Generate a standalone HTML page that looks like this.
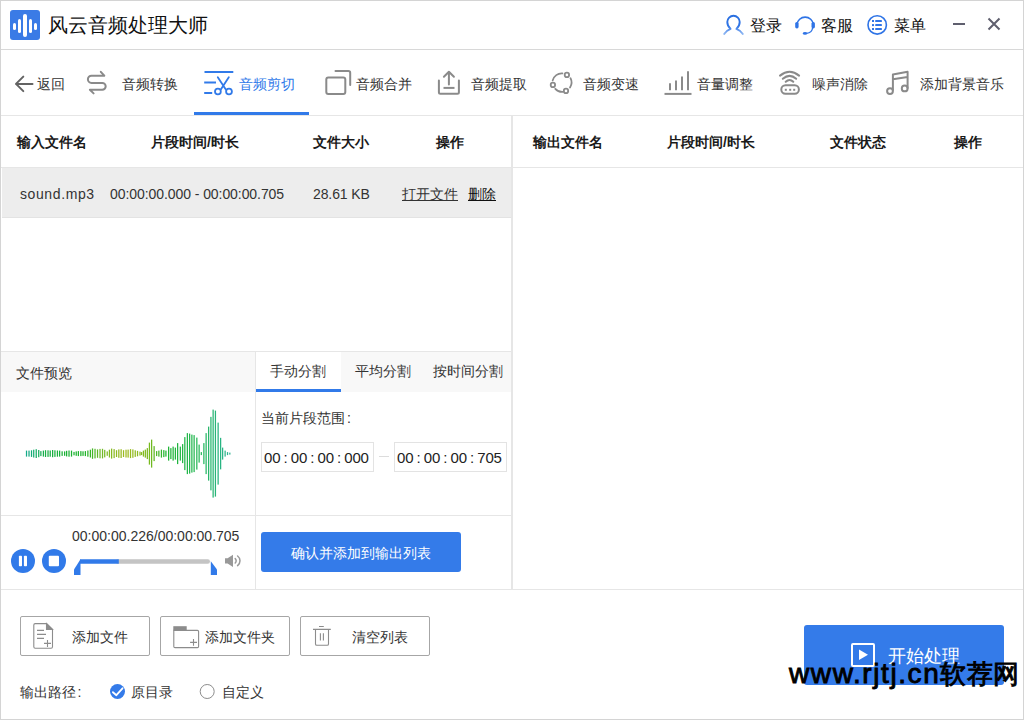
<!DOCTYPE html>
<html><head><meta charset="utf-8">
<style>
html,body{margin:0;padding:0;}
body{width:1024px;height:720px;position:relative;overflow:hidden;background:#fff;font-family:"Liberation Sans",sans-serif;color:#333;}
.a{position:absolute;}
.t{position:absolute;white-space:nowrap;line-height:20px;font-size:14px;}
.hl{position:absolute;height:1px;background:#e6e6e6;}
.vl{position:absolute;width:1px;background:#e6e6e6;}
.b{font-weight:bold;color:#1a1a1a;}
svg{position:absolute;overflow:visible;}
</style></head><body>
<!-- window border -->
<div class="a" style="left:0;top:0;width:1022px;height:718px;border:1px solid #d4d4d4;"></div>

<!-- TITLE BAR -->
<div class="a" style="left:10px;top:10px;width:30px;height:30px;background:#3a7be6;border-radius:3px;"></div>
<div class="a" style="left:13px;top:22.7px;width:3px;height:7.5px;background:#fff;border-radius:1.5px;"></div>
<div class="a" style="left:18px;top:18.9px;width:3px;height:14.2px;background:#fff;border-radius:1.5px;"></div>
<div class="a" style="left:23px;top:13.9px;width:4px;height:23px;background:#fff;border-radius:2px;"></div>
<div class="a" style="left:29px;top:18.9px;width:3px;height:14.2px;background:#fff;border-radius:1.5px;"></div>
<div class="a" style="left:34px;top:22.7px;width:3px;height:7.5px;background:#fff;border-radius:1.5px;"></div>
<div class="t" style="left:48px;top:15px;font-size:20px;color:#111;">风云音频处理大师</div>

<!-- user icon -->
<svg width="1024" height="720" style="left:0;top:0;">
<defs>
<linearGradient id="ug" x1="0" y1="15" x2="0" y2="35" gradientUnits="userSpaceOnUse"><stop offset="0" stop-color="#2a6fe0"/><stop offset="0.55" stop-color="#2f74e6"/><stop offset="1" stop-color="#9cc0f4"/></linearGradient>
</defs>
<path d="M724.2 34 C725.8 31.3 727.8 30 730.6 28.9 C728.3 27 727.3 24.6 727.3 22 A6.2 6.2 0 0 1 739.7 22 C739.7 24.6 738.7 27 736.4 28.9 C739.2 30 741.2 31.3 742.8 34" fill="none" stroke="url(#ug)" stroke-width="1.9" stroke-linecap="round" stroke-linejoin="round"/>
<!-- headset -->
<path d="M796.9 24.5 A8.3 8.3 0 0 1 813.4 24.5" fill="none" stroke="#2f74e6" stroke-width="1.6"/>
<rect x="795.2" y="22" width="3.4" height="6.4" rx="1.6" fill="#2f74e6"/>
<rect x="811.5" y="22" width="3.4" height="6.4" rx="1.6" fill="#2f74e6"/>
<path d="M812.5 28 Q812.3 32.6 806.5 33.3" fill="none" stroke="#2f74e6" stroke-width="1.3"/>
<ellipse cx="805" cy="33.4" rx="2.2" ry="1.4" fill="#2f74e6"/>
<!-- menu -->
<circle cx="877.2" cy="24.9" r="9.2" fill="none" stroke="#2f74e6" stroke-width="1.6"/>
<rect x="872" y="20" width="2" height="2" fill="#2f74e6"/>
<rect x="872" y="24.1" width="2" height="2" fill="#2f74e6"/>
<rect x="872" y="28" width="2" height="2" fill="#2f74e6"/>
<rect x="875.2" y="20" width="6.7" height="2" rx="0.6" fill="#2f74e6"/>
<rect x="875.2" y="24.1" width="6.7" height="2" rx="0.6" fill="#2f74e6"/>
<rect x="875.2" y="28" width="6.7" height="2" rx="0.6" fill="#2f74e6"/>
<!-- minimize / close -->
<rect x="953" y="23" width="12" height="2" fill="#5f5f6e"/>
<path d="M988.5 18.5 L999.5 29.5 M999.5 18.5 L988.5 29.5" stroke="#5f5f6e" stroke-width="2" fill="none"/>
</svg>
<div class="t" style="left:750px;top:16px;font-size:16px;color:#111;">登录</div>
<div class="t" style="left:821px;top:16px;font-size:16px;color:#111;">客服</div>
<div class="t" style="left:894px;top:16px;font-size:16px;color:#111;">菜单</div>

<div class="hl" style="left:1px;top:49px;width:1022px;background:#d8d8d8;"></div>

<!-- TOOLBAR -->
<svg width="1024" height="720" style="left:0;top:0;" fill="none" stroke="#8a8a8a" stroke-width="2" stroke-linecap="round" stroke-linejoin="round">
<!-- back -->
<path d="M23.3 76.6 L16 83.9 L23.3 91.1 M16 83.9 L32.5 83.9" stroke="#636363"/>
<!-- swap -->
<path d="M100.8 71.8 L104.3 75.7 L91.5 75.7 A3.6 3.6 0 0 0 91.5 82.9 L102.3 82.9 A3.4 3.4 0 0 1 102.3 89.7 L89.9 89.7 L93.6 93.4"/>
<!-- scissors (active) -->
<g stroke="#317ae9">
<path d="M204.5 71.9 L233.3 71.9 M204.2 82.5 L216 82.5 M204.2 93 L212.2 93" stroke-linecap="butt"/>
<path d="M217.8 77.3 L225.8 89.5 M228.8 77.3 L220.8 89.5" stroke-width="1.8"/>
<circle cx="217.9" cy="91.5" r="2.9" stroke-width="1.8"/>
<circle cx="229" cy="91.5" r="2.9" stroke-width="1.8"/>
</g>
<!-- merge -->
<rect x="326.3" y="77.4" width="19" height="16.6" rx="2"/>
<path d="M335.5 71 L348.4 71 Q350.2 71 350.2 72.8 L350.2 85" />
<!-- extract -->
<path d="M438.9 80.5 L438.9 92.3 Q438.9 93.8 440.4 93.8 L457.4 93.8 Q458.9 93.8 458.9 92.3 L458.9 80.5"/>
<path d="M448.9 72.3 L448.9 84.4 M443.9 76.7 L448.9 71.7 L453.9 76.7"/>
<path d="M443.5 87.9 L454.5 87.9" stroke-linecap="butt"/>
<!-- speed -->
<g stroke-width="1.8">
<path d="M552.7 80.4 A9.3 9.3 0 0 1 562.4 73.4"/>
<path d="M570.5 78.2 A9.3 9.3 0 0 1 570 87.5"/>
<path d="M563 91.8 A9.3 9.3 0 0 1 555.3 88.8"/>
<circle cx="566.9" cy="74.9" r="2.2"/>
<circle cx="552.9" cy="84.9" r="2.2"/>
<circle cx="566" cy="90.9" r="2.2"/>
</g>
<!-- volume -->
<path d="M664.5 93.9 L691.5 93.9" stroke-linecap="butt"/>
<path d="M670 83.3 L670 90.2 M676 80.4 L676 90.2 M682 76.4 L682 90.2 M688 71.3 L688 90.2" stroke-linecap="butt"/>
<!-- noise -->
<path d="M780 75.6 Q789.6 68 799.1 75.6 M782.8 78.8 Q789.6 73 796.2 78.8 M785.7 81.8 Q789.6 78 793.3 81.8"/>
<rect x="781.3" y="85.3" width="17.6" height="8.4" rx="4.2"/>
<g fill="#8a8a8a" stroke="none">
<rect x="784.8" y="88.8" width="2" height="2"/><rect x="789.2" y="88.8" width="2" height="2"/><rect x="793.2" y="88.8" width="2" height="2"/>
</g>
<!-- music -->
<path d="M892.9 90 L892.9 74.4 L907.6 71.8 L907.6 88 M892.9 79.3 L907.6 77"/>
<circle cx="890" cy="91.1" r="2.9"/>
<circle cx="904.7" cy="88.4" r="2.9"/>
</svg>
<div class="t" style="left:37px;top:74px;">返回</div>
<div class="t" style="left:122px;top:74px;">音频转换</div>
<div class="t" style="left:239px;top:74px;color:#317ae9;">音频剪切</div>
<div class="t" style="left:356px;top:74px;">音频合并</div>
<div class="t" style="left:471px;top:74px;">音频提取</div>
<div class="t" style="left:583px;top:74px;">音频变速</div>
<div class="t" style="left:697px;top:74px;">音量调整</div>
<div class="t" style="left:812px;top:74px;">噪声消除</div>
<div class="t" style="left:920px;top:74px;">添加背景音乐</div>
<div class="a" style="left:194px;top:112px;width:115px;height:3px;background:#317ae9;"></div>
<div class="hl" style="left:1px;top:115px;width:1022px;"></div>

<!-- MAIN TABLES -->
<div class="a" style="left:511px;top:116px;width:2px;height:473px;background:#e6e6e6;"></div>
<div class="t b" style="left:17px;top:132px;">输入文件名</div>
<div class="t b" style="left:151px;top:132px;">片段时间/时长</div>
<div class="t b" style="left:313px;top:132px;">文件大小</div>
<div class="t b" style="left:436px;top:132px;">操作</div>
<div class="t b" style="left:533px;top:132px;">输出文件名</div>
<div class="t b" style="left:667px;top:132px;">片段时间/时长</div>
<div class="t b" style="left:830px;top:132px;">文件状态</div>
<div class="t b" style="left:954px;top:132px;">操作</div>
<div class="hl" style="left:1px;top:167px;width:1022px;"></div>
<div class="a" style="left:2px;top:168px;width:509px;height:49px;background:#ededed;border-bottom:1px solid #e3e3e3;"></div>
<div class="t" style="left:20px;top:184px;letter-spacing:0.6px;color:#333;">sound.mp3</div>
<div class="t" style="left:110px;top:184px;letter-spacing:-0.07px;color:#333;">00:00:00.000 - 00:00:00.705</div>
<div class="t" style="left:313px;top:184px;letter-spacing:-0.1px;color:#333;">28.61 KB</div>
<div class="t" style="left:402px;top:184px;color:#333;text-decoration:underline;">打开文件</div>
<div class="t" style="left:468px;top:184px;color:#111;text-decoration:underline;">删除</div>

<!-- PREVIEW -->
<div class="hl" style="left:1px;top:351px;width:510px;"></div>
<div class="a" style="left:1px;top:352px;width:254px;height:40px;background:#f8f8f8;"></div>
<div class="a" style="left:341px;top:352px;width:170px;height:40px;background:#f8f8f8;"></div>
<div class="vl" style="left:255px;top:352px;height:237px;"></div>
<div class="a" style="left:256px;top:389px;width:85px;height:3px;background:#317ae9;"></div>
<div class="t" style="left:16px;top:363px;">文件预览</div>
<div class="t" style="left:270px;top:361px;">手动分割</div>
<div class="t" style="left:355px;top:361px;">平均分割</div>
<div class="t" style="left:433px;top:361px;">按时间分割</div>
<!-- WAVE --><svg width="1024" height="720" style="left:0;top:0;"><rect x="25.90" y="450.60" width="1.25" height="6.00" fill="#14aa8a"/><rect x="28.40" y="450.60" width="1.25" height="6.00" fill="#14aa81"/><rect x="30.90" y="450.30" width="1.25" height="6.60" fill="#15ab78"/><rect x="33.10" y="449.70" width="1.25" height="7.80" fill="#16ac70"/><rect x="35.60" y="449.20" width="1.25" height="8.80" fill="#16ac66"/><rect x="38.10" y="450.00" width="1.25" height="7.20" fill="#17ad5d"/><rect x="40.25" y="451.10" width="1.25" height="5.00" fill="#17ad55"/><rect x="42.75" y="450.60" width="1.25" height="6.00" fill="#18ae4c"/><rect x="44.90" y="450.20" width="1.25" height="6.80" fill="#19af45"/><rect x="47.40" y="450.30" width="1.25" height="6.60" fill="#19af43"/><rect x="49.60" y="450.50" width="1.25" height="6.20" fill="#19af42"/><rect x="52.00" y="450.00" width="1.25" height="7.20" fill="#19af40"/><rect x="54.30" y="450.30" width="1.25" height="6.60" fill="#1ab03e"/><rect x="56.80" y="450.50" width="1.25" height="6.20" fill="#1ab03c"/><rect x="59.00" y="450.60" width="1.25" height="6.00" fill="#1ab03b"/><rect x="61.50" y="451.30" width="1.25" height="4.60" fill="#1bb139"/><rect x="64.00" y="451.40" width="1.25" height="4.40" fill="#1bb137"/><rect x="66.00" y="450.80" width="1.25" height="5.60" fill="#1bb135"/><rect x="68.40" y="450.50" width="1.25" height="6.20" fill="#1bb134"/><rect x="70.90" y="450.60" width="1.25" height="6.00" fill="#1cb232"/><rect x="73.40" y="451.90" width="1.25" height="3.40" fill="#1cb230"/><rect x="75.60" y="451.40" width="1.25" height="4.40" fill="#1cb22e"/><rect x="77.75" y="451.10" width="1.25" height="5.00" fill="#1db32d"/><rect x="80.25" y="451.10" width="1.25" height="5.00" fill="#1db32b"/><rect x="82.40" y="451.30" width="1.25" height="4.60" fill="#1db329"/><rect x="84.75" y="451.10" width="1.25" height="5.00" fill="#1fb428"/><rect x="87.25" y="450.50" width="1.25" height="6.20" fill="#2cb428"/><rect x="89.75" y="449.70" width="1.25" height="7.80" fill="#3ab528"/><rect x="91.90" y="448.40" width="1.25" height="10.40" fill="#45b628"/><rect x="94.40" y="448.80" width="1.25" height="9.60" fill="#52b728"/><rect x="96.90" y="449.40" width="1.25" height="8.40" fill="#60b828"/><rect x="99.40" y="448.90" width="1.25" height="9.40" fill="#6db828"/><rect x="101.90" y="448.80" width="1.25" height="9.60" fill="#72b927"/><rect x="104.10" y="449.85" width="1.25" height="7.50" fill="#77b926"/><rect x="106.60" y="451.40" width="1.25" height="4.40" fill="#7cb925"/><rect x="108.80" y="449.70" width="1.25" height="7.80" fill="#80b924"/><rect x="111.00" y="448.60" width="1.25" height="10.00" fill="#85b923"/><rect x="113.50" y="449.10" width="1.25" height="9.00" fill="#8ab922"/><rect x="115.90" y="450.20" width="1.25" height="6.80" fill="#8eb921"/><rect x="118.20" y="449.40" width="1.25" height="8.40" fill="#93b920"/><rect x="120.50" y="449.20" width="1.25" height="8.80" fill="#98b91f"/><rect x="122.90" y="450.20" width="1.25" height="6.80" fill="#9cb91e"/><rect x="125.40" y="449.70" width="1.25" height="7.80" fill="#9eb91e"/><rect x="127.50" y="449.60" width="1.25" height="8.00" fill="#9bb91e"/><rect x="129.90" y="449.10" width="1.25" height="9.00" fill="#97b91e"/><rect x="132.25" y="449.40" width="1.25" height="8.40" fill="#93b91e"/><rect x="134.60" y="450.30" width="1.25" height="6.60" fill="#8fb91e"/><rect x="136.90" y="450.90" width="1.25" height="5.40" fill="#8cb91e"/><rect x="139.40" y="451.60" width="1.25" height="4.00" fill="#88b91e"/><rect x="141.00" y="452.10" width="1.25" height="3.00" fill="#85b91e"/><rect x="142.80" y="450.60" width="1.25" height="6.00" fill="#82b91e"/><rect x="144.70" y="449.60" width="1.25" height="8.00" fill="#7fb91e"/><rect x="146.70" y="448.10" width="1.25" height="11.00" fill="#7cb91e"/><rect x="148.80" y="442.60" width="1.25" height="22.00" fill="#79b91e"/><rect x="151.00" y="439.60" width="1.25" height="28.00" fill="#6fb820"/><rect x="153.50" y="446.10" width="1.25" height="15.00" fill="#60b723"/><rect x="156.00" y="451.10" width="1.25" height="5.00" fill="#51b626"/><rect x="158.25" y="450.60" width="1.25" height="6.00" fill="#43b629"/><rect x="160.80" y="449.60" width="1.25" height="8.00" fill="#34b52d"/><rect x="163.20" y="450.10" width="1.25" height="7.00" fill="#25b430"/><rect x="165.30" y="450.60" width="1.25" height="6.00" fill="#1eb432"/><rect x="168.00" y="446.60" width="1.25" height="14.00" fill="#1fb436"/><rect x="170.25" y="448.10" width="1.25" height="11.00" fill="#1fb438"/><rect x="172.50" y="446.60" width="1.25" height="14.00" fill="#20b53b"/><rect x="174.75" y="447.60" width="1.25" height="12.00" fill="#20b53d"/><rect x="177.00" y="443.10" width="1.25" height="21.00" fill="#21b540"/><rect x="179.70" y="446.60" width="1.25" height="14.00" fill="#22b643"/><rect x="182.00" y="444.10" width="1.25" height="19.00" fill="#23b646"/><rect x="184.20" y="437.10" width="1.25" height="33.00" fill="#23b648"/><rect x="186.75" y="433.10" width="1.25" height="41.00" fill="#24b74b"/><rect x="189.00" y="433.60" width="1.25" height="40.00" fill="#25b74e"/><rect x="191.25" y="434.60" width="1.25" height="38.00" fill="#25b750"/><rect x="193.50" y="435.10" width="1.25" height="37.00" fill="#26b853"/><rect x="196.20" y="437.60" width="1.25" height="32.00" fill="#27b856"/><rect x="198.50" y="444.60" width="1.25" height="18.00" fill="#27b858"/><rect x="200.70" y="452.10" width="1.25" height="3.00" fill="#28b85c"/><rect x="203.25" y="443.10" width="1.25" height="21.00" fill="#28b861"/><rect x="205.50" y="433.10" width="1.25" height="41.00" fill="#28b766"/><rect x="208.00" y="426.60" width="1.25" height="54.00" fill="#28b66b"/><rect x="210.30" y="416.85" width="1.25" height="73.50" fill="#28b66f"/><rect x="212.50" y="409.60" width="1.25" height="88.00" fill="#28b574"/><rect x="214.80" y="410.60" width="1.25" height="86.00" fill="#28b578"/><rect x="217.50" y="422.60" width="1.25" height="62.00" fill="#28b47e"/><rect x="220.00" y="437.85" width="1.25" height="31.50" fill="#28b482"/><rect x="222.00" y="447.60" width="1.25" height="12.00" fill="#2ab486"/><rect x="224.50" y="450.60" width="1.25" height="6.00" fill="#2cb48b"/><rect x="226.90" y="452.10" width="1.25" height="3.00" fill="#2eb48f"/><rect x="229.20" y="452.60" width="1.25" height="2.00" fill="#30b493"/></svg>
<!-- /WAVE -->
<div class="t" style="left:261px;top:408px;">当前片段范围<span style="margin-left:2px">:</span></div>
<div class="a" style="left:261px;top:442px;width:111px;height:28px;border:1px solid #e3e3e3;"></div>
<div class="a" style="left:394px;top:442px;width:111px;height:28px;border:1px solid #e3e3e3;"></div>
<div class="a" style="left:379px;top:456px;width:10px;height:1px;background:#dcdcdc;"></div>
<div class="t" style="left:264px;top:448px;font-size:15px;word-spacing:-0.8px;letter-spacing:-0.17px;color:#222;">00 : 00 : 00 : 000</div>
<div class="t" style="left:397px;top:448px;font-size:15px;word-spacing:-0.8px;letter-spacing:-0.17px;color:#222;">00 : 00 : 00 : 705</div>
<div class="hl" style="left:1px;top:515px;width:510px;"></div>
<div class="t" style="left:72px;top:526px;">00:00:00.226/00:00:00.705</div>
<svg width="1024" height="720" style="left:0;top:0;">
<circle cx="23" cy="561" r="12" fill="#317ae9"/>
<rect x="18.9" y="555.8" width="3.1" height="10.4" rx="0.8" fill="#fff"/>
<rect x="23.9" y="555.8" width="3.1" height="10.4" rx="0.8" fill="#fff"/>
<circle cx="54" cy="561" r="12" fill="#317ae9"/>
<rect x="48.8" y="555.8" width="10.2" height="10.4" rx="1" fill="#fff"/>
<path d="M118 561.5 L207.8 561.5" stroke="#c4c4c4" stroke-width="4.4" stroke-linecap="round"/>
<path d="M80 561.5 L118.8 561.5" stroke="#317ae9" stroke-width="4.4"/>
<path d="M80.5 559.3 L80.5 575 L74 575 L74 569.4 Z" fill="#317ae9"/>
<path d="M210.8 561.2 L217 569.4 L217 575 L210.8 575 Z" fill="#317ae9"/>
<path d="M225 558.2 L227.6 558.2 L233 554.7 L233 567 L227.6 563.4 L225 563.4 Z" fill="#999"/>
<path d="M235.2 558.6 A3 3 0 0 1 235.2 563 M237.6 556 A6 6 0 0 1 237.6 565.6" fill="none" stroke="#999" stroke-width="1.5" stroke-linecap="round"/>
</svg>
<div class="a" style="left:261px;top:532px;width:200px;height:40px;background:#347be9;border-radius:3px;"></div>
<div class="t" style="left:291px;top:543px;color:#fff;">确认并添加到输出列表</div>
<div class="hl" style="left:1px;top:589px;width:1022px;"></div>

<!-- BOTTOM -->
<div class="a" style="left:20px;top:616px;width:128px;height:38px;border:1px solid #a6a6a6;border-radius:2px;"></div>
<div class="a" style="left:160px;top:616px;width:128px;height:38px;border:1px solid #a6a6a6;border-radius:2px;"></div>
<div class="a" style="left:300px;top:616px;width:128px;height:38px;border:1px solid #a6a6a6;border-radius:2px;"></div>
<svg width="1024" height="720" style="left:0;top:0;" fill="none" stroke="#8c8c8c" stroke-width="1.1">
<path d="M46.5 623.6 L35.2 623.6 Q33.8 623.6 33.8 625 L33.8 646.8 Q33.8 648.2 35.2 648.2 L51.1 648.2 Q52.5 648.2 52.5 646.8 L52.5 629.4 Z"/>
<path d="M46.5 623.6 L46.5 629.4 L52.5 629.4 Z" fill="#8c8c8c"/>
<path d="M37 630.4 L44 630.4 M37 634.4 L46 634.4 M37 638.4 L44 638.4 M44 643.4 L51 643.4 M47.5 640 L47.5 647"/>
<rect x="173.3" y="626.2" width="13.4" height="4.4" fill="#8c8c8c" stroke="none"/>
<path d="M173.8 630.4 L197.4 630.4 Q198.6 630.4 198.6 631.6 L198.6 646.4 Q198.6 647.6 197.4 647.6 L175 647.6 Q173.8 647.6 173.8 646.4 Z"/>
<path d="M190.1 642.4 L197 642.4 M193.5 639 L193.5 645.8"/>
<path d="M319 626.5 L323.8 626.5 M313 629.4 L330.8 629.4 M315.5 629.4 L315.5 644 Q315.5 645.3 316.8 645.3 L327.2 645.3 Q328.5 645.3 328.5 644 L328.5 629.4 M320.4 633.3 L320.4 640.6 M323.4 633.3 L323.4 640.6"/>
<circle cx="117.5" cy="691.5" r="7.5" fill="#347be9" stroke="none"/>
<path d="M112.9 692.2 L116.4 695.2 L122.5 688.3" stroke="#fff" stroke-width="1.8" stroke-linecap="round" stroke-linejoin="round"/>
<circle cx="207.2" cy="691.5" r="7" stroke="#8c8c8c" stroke-width="1"/>
</svg>
<div class="t" style="left:72px;top:627px;">添加文件</div>
<div class="t" style="left:205px;top:627px;">添加文件夹</div>
<div class="t" style="left:352px;top:627px;">清空列表</div>
<div class="t" style="left:20px;top:682px;">输出路径<span style="margin-left:1.5px">:</span></div>
<div class="t" style="left:131px;top:682px;">原目录</div>
<div class="t" style="left:222px;top:682px;">自定义</div>
<div class="a" style="left:804px;top:625px;width:200px;height:60px;background:#347be9;border-radius:3px;"></div>
<div class="a" style="left:851px;top:643px;width:20px;height:20px;border:2px solid #fff;border-radius:2px;"></div>
<svg width="1024" height="720" style="left:0;top:0;"><path d="M859 649.5 L868 654.7 L859 660 Z" fill="#fff"/></svg>
<div class="t" style="left:888px;top:645px;font-size:18px;color:#fff;line-height:22px;">开始处理</div>
<!-- watermark -->
<div class="t" style="left:789px;top:658px;line-height:32px;color:#000;-webkit-text-stroke:0.9px #000;"><span style="font-size:28px;letter-spacing:1.6px;">www.rjtj.cn</span><span style="font-size:26px;letter-spacing:0.3px;">软荐网</span></div>
</body></html>
